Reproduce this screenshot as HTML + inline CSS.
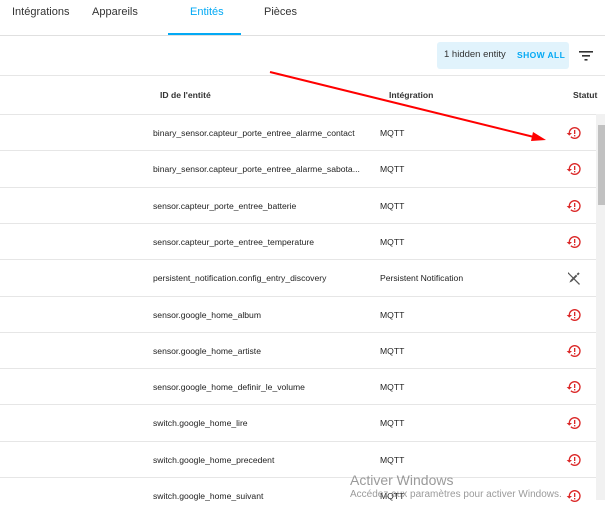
<!DOCTYPE html>
<html><head><meta charset="utf-8"><style>
*{margin:0;padding:0;box-sizing:border-box}
body{width:605px;height:500px;overflow:hidden;background:#fff;font-family:"Liberation Sans",Arial,sans-serif;color:#212121;position:relative}
.abs{position:absolute}
.tab{position:absolute;top:6px;font-size:11px;color:#333}
.row{position:absolute;left:0;width:596px;height:37px;border-top:1px solid #e6e6e6}
.row .id{position:absolute;left:153px;top:13px;font-size:8.6px;color:#222}
.row .in{position:absolute;left:380px;top:13px;font-size:8.6px;color:#222}
.row svg{position:absolute;left:566px;top:10px}
</style></head><body>
<div class="tab" style="left:12px">Intégrations</div>
<div class="tab" style="left:92px">Appareils</div>
<div class="tab" style="left:190px;color:#03a9f4">Entités</div>
<div class="tab" style="left:264px">Pièces</div>
<div class="abs" style="left:168px;top:33px;width:73px;height:2px;background:#03a9f4"></div>
<div class="abs" style="left:0;top:35px;width:605px;height:1px;background:#e0e0e0"></div>
<div class="abs" style="left:437px;top:42px;width:132px;height:27px;background:#e1f3fc;border-radius:3px"></div>
<div class="abs" style="left:444px;top:49px;font-size:9.5px;color:#333">1 hidden entity</div>
<div class="abs" style="left:517px;top:50px;font-size:8.5px;color:#03a9f4;font-weight:bold;letter-spacing:.4px">SHOW ALL</div>
<svg class="abs" style="left:578px;top:48px" width="16" height="14" viewBox="0 0 16 14"><rect x="1" y="3" width="14" height="1.6" fill="#333"/><rect x="4" y="7" width="8" height="1.6" fill="#333"/><rect x="6.5" y="11" width="3" height="1.6" fill="#333"/></svg>
<div class="abs" style="left:0;top:75px;width:605px;height:1px;background:#e6e6e6"></div>
<div class="abs" style="left:160px;top:90px;font-size:8.6px;font-weight:bold;color:#333">ID de l'entité</div>
<div class="abs" style="left:389px;top:90px;font-size:8.6px;font-weight:bold;color:#333">Intégration</div>
<div class="abs" style="left:573px;top:90px;font-size:8.6px;font-weight:bold;color:#333">Statut</div>
<div class="abs" style="left:596px;top:114px;width:9px;height:386px;background:#f1f1f1"></div>
<div class="abs" style="left:598px;top:125px;width:7px;height:80px;background:#c1c1c1"></div>
<div id="rows"></div>
<script>
const d=[["binary_sensor.capteur_porte_entree_alarme_contact","MQTT"],["binary_sensor.capteur_porte_entree_alarme_sabota...","MQTT"],["sensor.capteur_porte_entree_batterie","MQTT"],["sensor.capteur_porte_entree_temperature","MQTT"],["persistent_notification.config_entry_discovery","Persistent Notification",1],["sensor.google_home_album","MQTT"],["sensor.google_home_artiste","MQTT"],["sensor.google_home_definir_le_volume","MQTT"],["switch.google_home_lire","MQTT"],["switch.google_home_precedent","MQTT"],["switch.google_home_suivant","MQTT"]];
const ra='<svg width="16" height="16" viewBox="0 0 24 24"><path fill="#db2828" d="M13,3A9,9 0 0,0 4,12H1L4.89,15.89L4.96,16.03L9,12H6A7,7 0 0,1 13,5A7,7 0 0,1 20,12A7,7 0 0,1 13,19C11.07,19 9.32,18.21 8.06,16.94L6.64,18.36C8.27,20 10.5,21 13,21A9,9 0 0,0 22,12A9,9 0 0,0 13,3M12,7.5H14V13.5H12V7.5M12,15H14V17H12V15Z"/></svg>';
const po='<svg width="16" height="16" viewBox="0 0 24 24"><path fill="#555" d="M3,3L21,21L19.6,22.4L3,5.4Z"/><path fill="#555" d="M18.5,3.5L20.5,5.5L18,8L16,6Z M15,7L17,9L9,17L5,19L7,15Z"/></svg>';
let h='';d.forEach((r,i)=>{h+=`<div class="row" style="top:${114+i*36.3}px"><div class="id">${r[0]}</div><div class="in">${r[1]}</div>${r[2]?po:ra}</div>`});
document.getElementById('rows').innerHTML=h;
</script>
<svg class="abs" style="left:0;top:0" width="605" height="500"><line x1="270" y1="72" x2="538" y2="138" stroke="#f00" stroke-width="2"/><polygon points="546,140 533,132 531,141" fill="#f00"/></svg>
<div class="abs" style="left:350px;top:472px;font-size:14px;color:rgba(120,120,120,.75)">Activer Windows</div>
<div class="abs" style="left:350px;top:489px;font-size:10px;color:rgba(120,120,120,.75)">Accédez aux paramètres pour activer Windows.</div>
</body></html>
